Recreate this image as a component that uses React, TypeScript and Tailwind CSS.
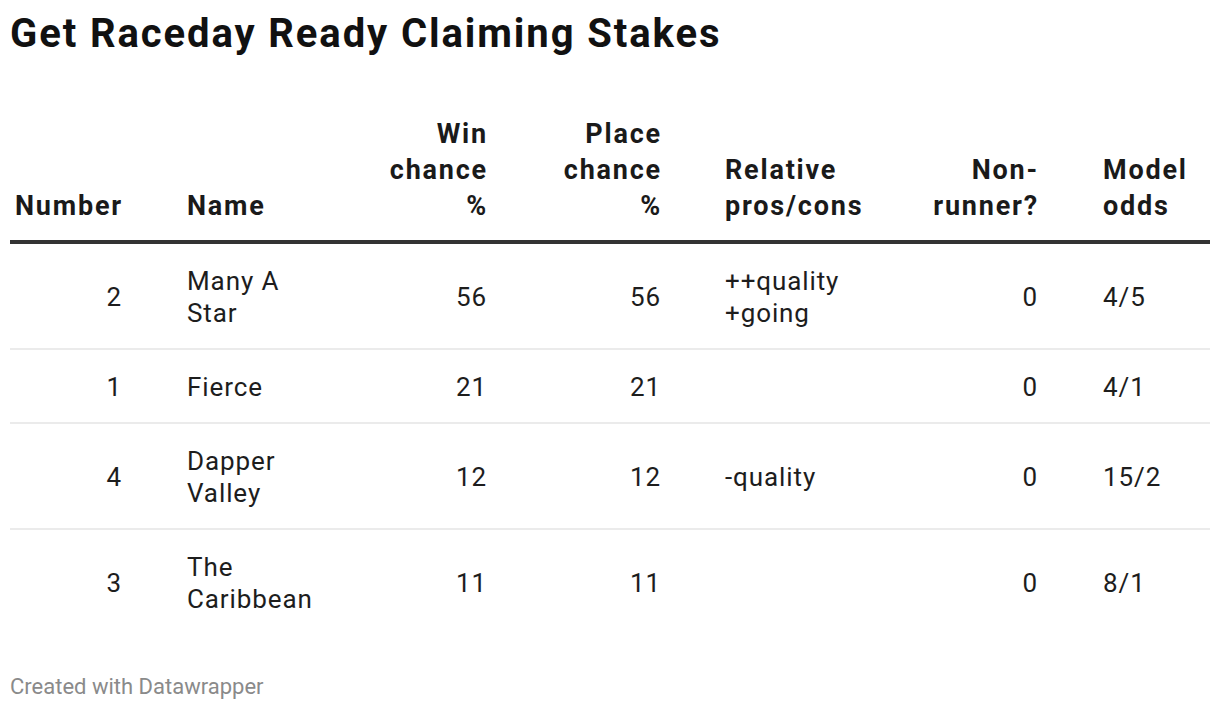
const rows = [
  { num: '2', name: ['Many A', 'Star'], win: '56', place: '56', pros: ['++quality', '+going'], nr: '0', odds: '4/5' },
  { num: '1', name: ['Fierce'], win: '21', place: '21', pros: [], nr: '0', odds: '4/1' },
  { num: '4', name: ['Dapper', 'Valley'], win: '12', place: '12', pros: ['-quality'], nr: '0', odds: '15/2' },
  { num: '3', name: ['The', 'Caribbean'], win: '11', place: '11', pros: [], nr: '0', odds: '8/1' },
]

function Lines({ lines }: { lines: string[] }) {
  return (
    <>
      {lines.map((l) => (
        <div key={l}>{l}</div>
      ))}
    </>
  )
}

export default function App() {
  return (
    <div className="w-[1220px] h-[710px] bg-white font-['Roboto',sans-serif] text-[#1d1d1d] overflow-hidden">
      <h1 className="pt-[11px] px-[10px] text-[40px] leading-[46px] tracking-[1.9px] font-bold text-[#111]">
        Get Raceday Ready Claiming Stakes
      </h1>

      <div className="mx-[10px] w-[1200px] mt-[59px]">
        <div className="flex items-end pb-[16px] border-b-4 border-[#333] text-[27px] leading-[36px] tracking-[1.8px] font-bold text-[#1a1a1a]">
          <div className="w-[113px] text-right">Number</div>
          <div className="ml-[64px] w-[160px]">Name</div>
          <div className="w-[141px] text-right">
            <Lines lines={['Win', 'chance', '%']} />
          </div>
          <div className="w-[174px] text-right">
            <Lines lines={['Place', 'chance', '%']} />
          </div>
          <div className="ml-[63px] w-[200px]">
            <Lines lines={['Relative', 'pros/cons']} />
          </div>
          <div className="w-[114px] text-right">
            <Lines lines={['Non-', 'runner?']} />
          </div>
          <div className="ml-[64px] w-[107px]">
            <Lines lines={['Model', 'odds']} />
          </div>
        </div>

        {rows.map((r, i) => (
          <div
            key={r.num}
            className={
              'flex items-center pt-[21px] pb-[19px] text-[26px] leading-[32px] tracking-[0.9px] ' +
              (i < rows.length - 1 ? 'border-b-2 border-[#ebebeb]' : '')
            }
          >
            <div className="w-[112px] text-right">{r.num}</div>
            <div className="ml-[65px] w-[160px]">
              <Lines lines={r.name} />
            </div>
            <div className="w-[140px] text-right">{r.win}</div>
            <div className="w-[174px] text-right">{r.place}</div>
            <div className="ml-[64px] w-[200px]">
              <Lines lines={r.pros} />
            </div>
            <div className="w-[113px] text-right">{r.nr}</div>
            <div className="ml-[65px] w-[107px]">{r.odds}</div>
          </div>
        ))}
      </div>

      <div className="mt-[40px] px-[10px] text-[22px] leading-[26px] text-[#8a8a8a]">
        Created with Datawrapper
      </div>
    </div>
  )
}
